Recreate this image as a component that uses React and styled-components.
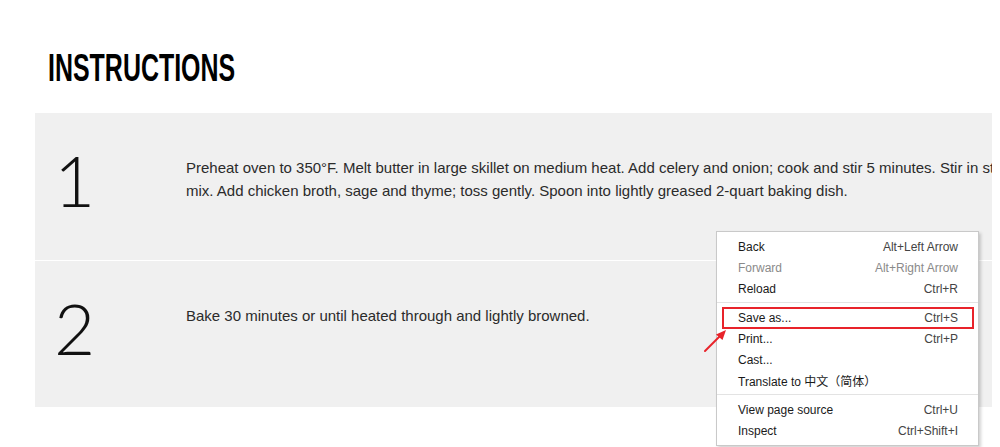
import React from 'react'
import styled, { createGlobalStyle } from 'styled-components'

const GlobalStyle = createGlobalStyle`
  html, body {
    margin: 0;
    padding: 0;
    background: #fff;
    overflow: hidden;
  }
`

const steps = [
  {
    id: 1,
    text: 'Preheat oven to 350°F. Melt butter in large skillet on medium heat. Add celery and onion; cook and stir 5 minutes. Stir in stuffing mix. Add chicken broth, sage and thyme; toss gently. Spoon into lightly greased 2-quart baking dish.',
  },
  {
    id: 2,
    text: 'Bake 30 minutes or until heated through and lightly browned.',
  },
]

const menu = [
  [
    { label: 'Back', keys: 'Alt+Left Arrow' },
    { label: 'Forward', keys: 'Alt+Right Arrow', disabled: true },
    { label: 'Reload', keys: 'Ctrl+R' },
  ],
  [
    { label: 'Save as...', keys: 'Ctrl+S', marked: true },
    { label: 'Print...', keys: 'Ctrl+P' },
    { label: 'Cast...' },
    { label: 'Translate to 中文（简体）' },
  ],
  [
    { label: 'View page source', keys: 'Ctrl+U' },
    { label: 'Inspect', keys: 'Ctrl+Shift+I' },
  ],
]

const App = () => {
  return (
    <>
      <GlobalStyle />
      <Page>
        <Heading>INSTRUCTIONS</Heading>
        <Steps>
          {steps.map((s) => (
            <Step key={s.id}>
              <Num>{s.id}</Num>
              <StepText>{s.text}</StepText>
            </Step>
          ))}
        </Steps>

        <Menu>
          {menu.map((group, gi) => (
            <React.Fragment key={gi}>
              {gi > 0 && <Separator />}
              {group.map((item) => (
                <MenuItem key={item.label} $disabled={item.disabled} $marked={item.marked}>
                  <span>{item.label}</span>
                  {item.keys && <Keys $disabled={item.disabled}>{item.keys}</Keys>}
                </MenuItem>
              ))}
            </React.Fragment>
          ))}
        </Menu>

        {/* annotation arrow pointing at "Save as..." */}
        <Arrow width="26" height="26" viewBox="0 0 26 26">
          <line x1="2" y1="23" x2="18" y2="7" stroke="#e8232a" strokeWidth="2" strokeLinecap="round" />
          <polygon points="23,2 13,6.5 19.5,12" fill="#e8232a" />
        </Arrow>
      </Page>
    </>
  )
}

const Page = styled.div`
  position: relative;
  width: 992px;
  height: 447px;
  overflow: hidden;
  padding: 0 0 0 35px;
  box-sizing: border-box;
`

const Heading = styled.h2`
  display: inline-block;
  margin: 46px 0 0 13px;
  height: 67px;
  font-family: "Liberation Sans Narrow", "Liberation Sans", sans-serif;
  font-weight: 700;
  font-size: 39px;
  line-height: 44px;
  color: #000;
  transform: scaleX(0.64);
  transform-origin: left center;
  white-space: nowrap;
`

const Steps = styled.div`
  width: 1100px;
  display: flex;
  flex-direction: column;
`

const Step = styled.div`
  display: grid;
  grid-template-columns: 151px 1fr;
  height: 147px;
  box-sizing: border-box;
  background: #f0f0f0;
  & + & {
    border-top: 1px solid #fff;
  }
`

const Num = styled.div`
  padding: 31px 0 0 19px;
  font-family: Lato, "Liberation Sans", sans-serif;
  font-weight: 300;
  font-size: 71px;
  line-height: 71px;
  color: #111;
`

const StepText = styled.p`
  margin: 0;
  padding-top: 43px;
  width: 855px;
  font-family: "Liberation Sans", Arial, sans-serif;
  font-size: 15px;
  line-height: 23px;
  color: #2b2b2b;
`

const Menu = styled.div`
  position: absolute;
  left: 716px;
  top: 231px;
  width: 263px;
  box-sizing: border-box;
  padding: 4px 0;
  background: #fff;
  border: 1px solid #c9c9c9;
  box-shadow: 2px 2px 3px rgba(0, 0, 0, 0.18);
  font-family: "Liberation Sans", "Noto Sans CJK SC", sans-serif;
  font-size: 12px;
`

const MenuItem = styled.div`
  position: relative;
  display: flex;
  justify-content: space-between;
  align-items: center;
  height: 21px;
  padding: 0 20px 0 21px;
  color: ${(p) => (p.$disabled ? '#8a8a8a' : '#1a1a1a')};
  white-space: nowrap;
  ${(p) =>
    p.$marked &&
    `
    &::after {
      content: '';
      position: absolute;
      left: 5px;
      right: 4px;
      top: 0;
      bottom: -1px;
      border: 2px solid #e8232a;
    }
  `}
`

const Keys = styled.span`
  color: ${(p) => (p.$disabled ? '#8a8a8a' : '#444')};
`

const Separator = styled.div`
  height: 1px;
  margin: 3px 0 4px;
  background: #e3e3e3;
`

const Arrow = styled.svg`
  position: absolute;
  left: 703px;
  top: 328px;
`

export default App
